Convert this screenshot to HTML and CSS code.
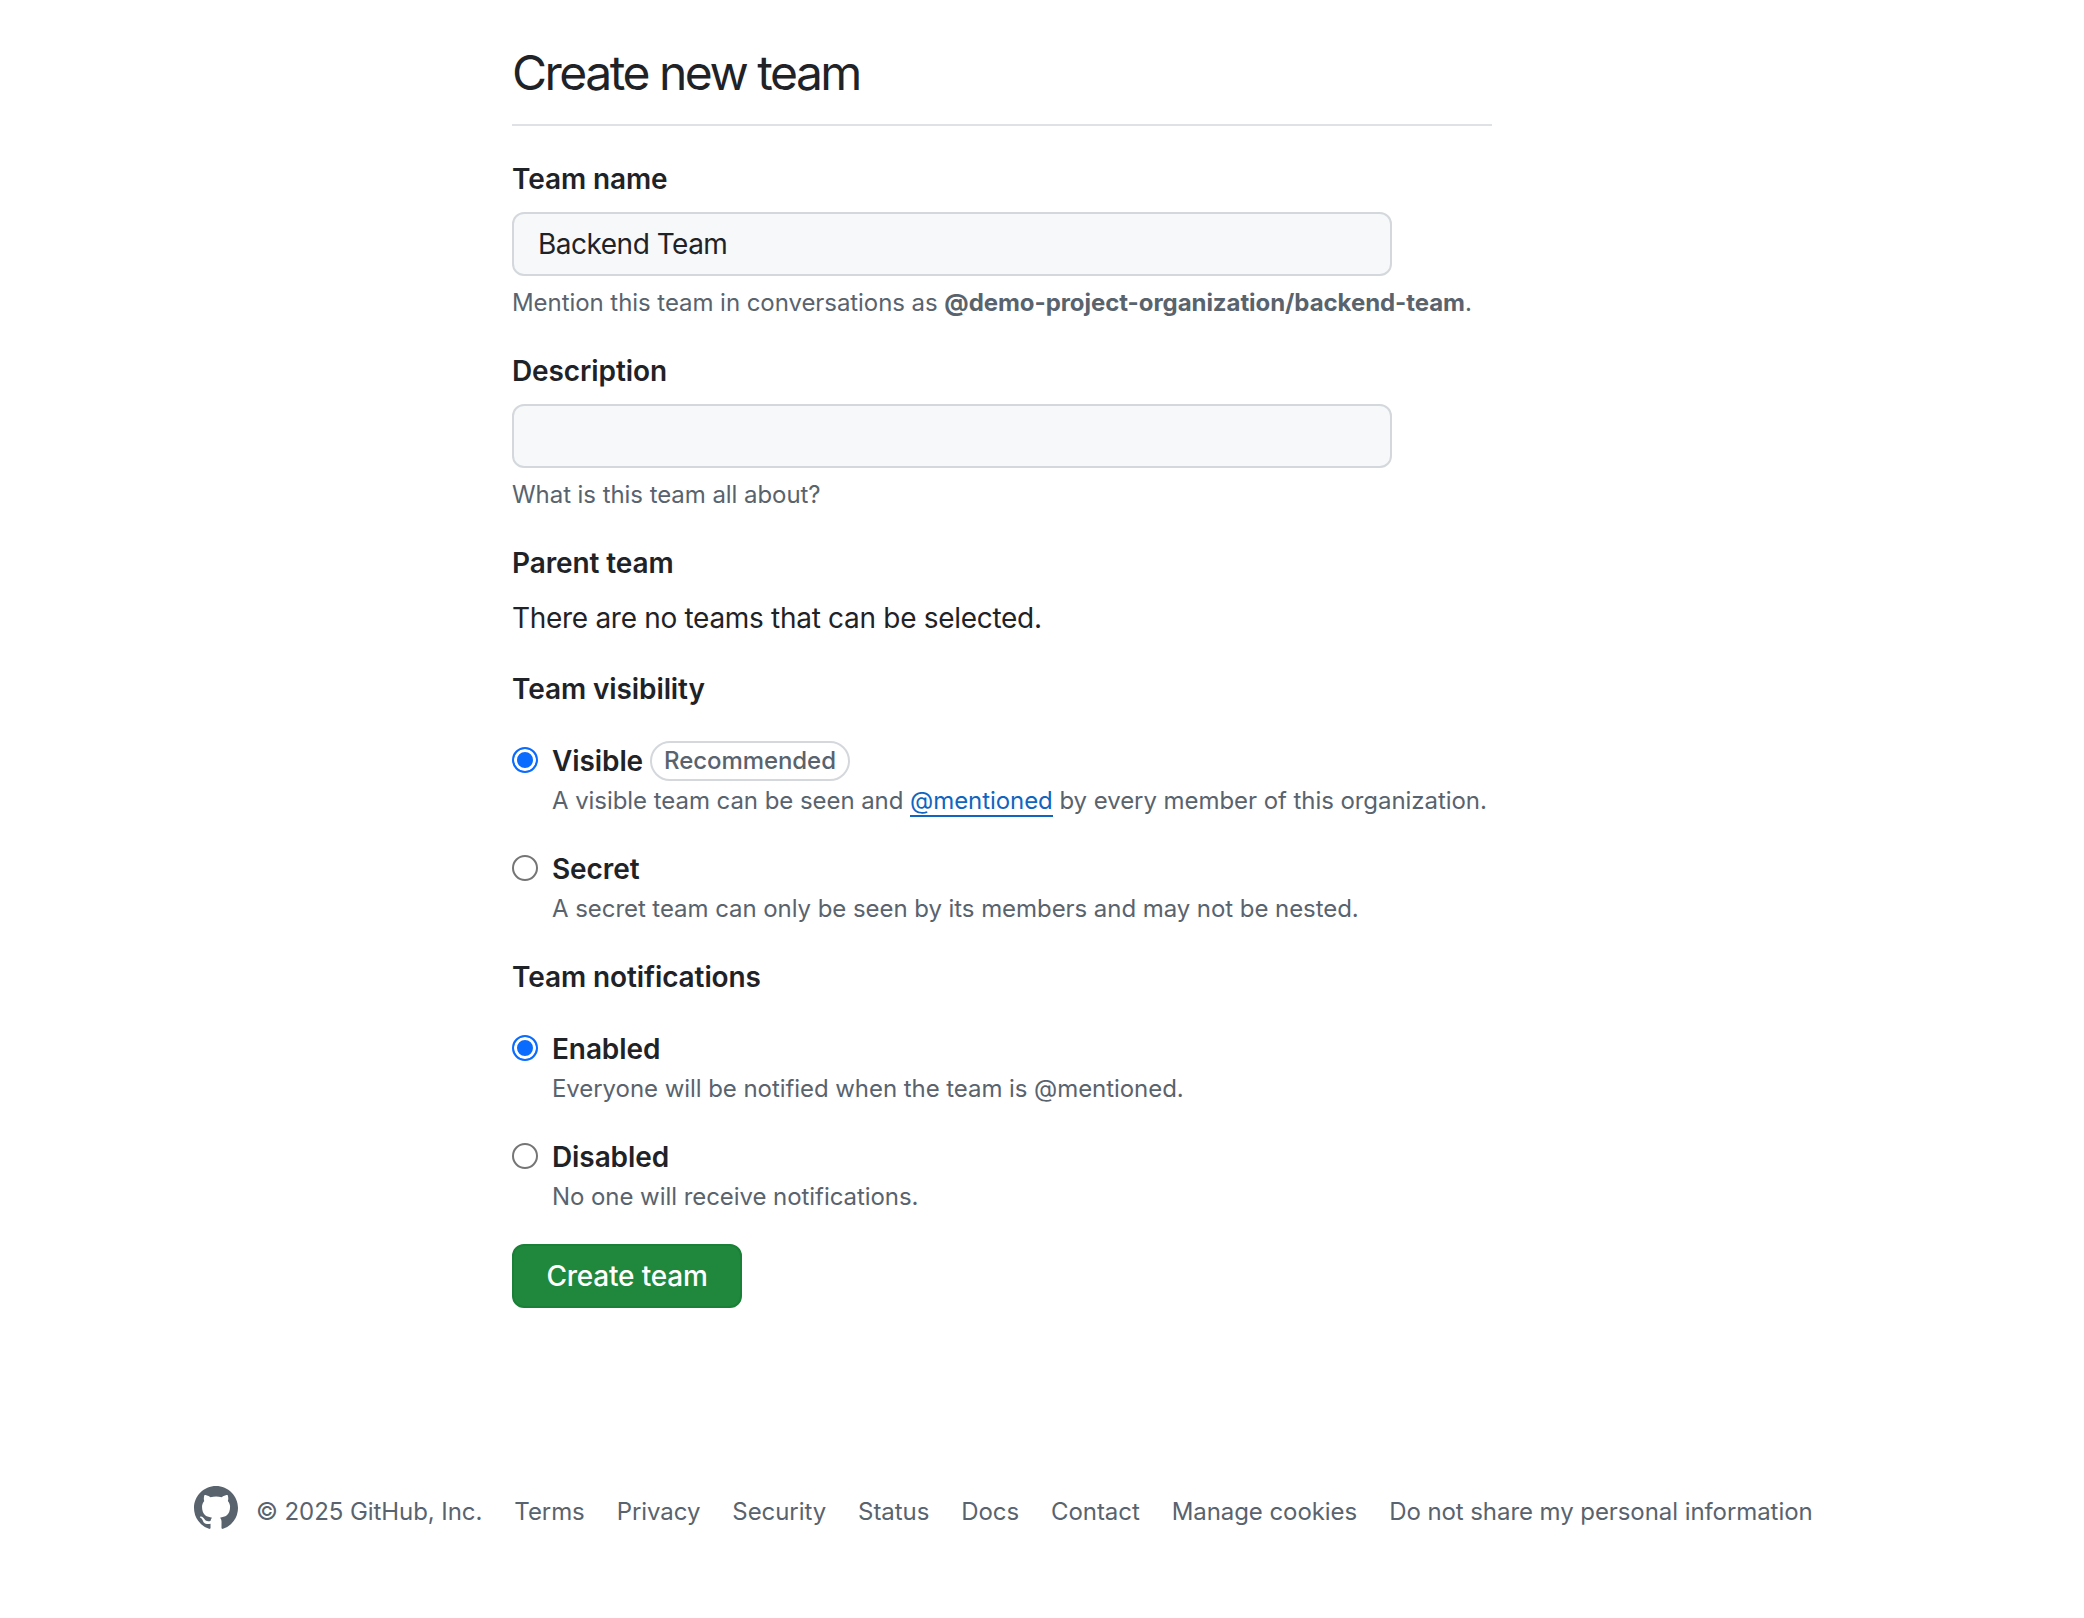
FILE: index.html
```html
<!DOCTYPE html>
<html lang="en">
<head>
    <meta charset="UTF-8">
    <title>Create new team</title>
    <link rel="stylesheet" href="styles.css">
</head>
<body>
    <main class="team-form">
        <h1 class="page-title">Create new team</h1>

        <div class="field">
            <label class="field-label">Team name</label>
            <input class="text-input" type="text" value="Backend Team">
            <p class="note">Mention this team in conversations as <strong>@demo-project-organization/backend-team</strong>.</p>
        </div>

        <div class="field">
            <label class="field-label">Description</label>
            <input class="text-input" type="text">
            <p class="note">What is this team all about?</p>
        </div>

        <div class="field parent-field">
            <label class="field-label">Parent team</label>
            <p class="plain-text">There are no teams that can be selected.</p>
        </div>

        <h2 class="group-title">Team visibility</h2>
        <div class="radio-row">
            <input class="radio" type="radio" name="visibility" checked>
            <div>
                <div class="radio-title">Visible <span class="pill">Recommended</span></div>
                <p class="note">A visible team can be seen and <a href="#">@mentioned</a> by every member of this organization.</p>
            </div>
        </div>
        <div class="radio-row">
            <input class="radio" type="radio" name="visibility">
            <div>
                <div class="radio-title">Secret</div>
                <p class="note">A secret team can only be seen by its members and may not be nested.</p>
            </div>
        </div>

        <h2 class="group-title">Team notifications</h2>
        <div class="radio-row">
            <input class="radio" type="radio" name="notifications" checked>
            <div>
                <div class="radio-title">Enabled</div>
                <p class="note">Everyone will be notified when the team is @mentioned.</p>
            </div>
        </div>
        <div class="radio-row">
            <input class="radio" type="radio" name="notifications">
            <div>
                <div class="radio-title">Disabled</div>
                <p class="note">No one will receive notifications.</p>
            </div>
        </div>

        <button class="create-button" type="button">Create team</button>
    </main>

    <footer class="site-footer">
        <svg class="mark" viewBox="0 0 16 16" aria-hidden="true"><path d="M8 0c4.42 0 8 3.58 8 8a8.013 8.013 0 0 1-5.45 7.59c-.4.08-.55-.17-.55-.38 0-.27.01-1.13.01-2.2 0-.75-.25-1.23-.54-1.48 1.78-.2 3.65-.88 3.65-3.95 0-.88-.31-1.59-.82-2.15.08-.2.36-1.02-.08-2.12 0 0-.67-.22-2.2.82-.64-.18-1.32-.27-2-.27-.68 0-1.36.09-2 .27-1.53-1.03-2.2-.82-2.2-.82-.44 1.1-.16 1.92-.08 2.12-.51.56-.82 1.28-.82 2.15 0 3.06 1.86 3.75 3.64 3.95-.23.2-.44.55-.51 1.07-.46.21-1.61.55-2.33-.66-.15-.24-.6-.83-1.23-.82-.67.01-.27.38.01.53.34.19.73.9.82 1.13.16.45.68 1.31 2.69.94 0 .67.01 1.3.01 1.49 0 .21-.15.45-.55.38A7.995 7.995 0 0 1 0 8c0-4.42 3.58-8 8-8Z"></path></svg>
        <span class="copyright">© 2025 GitHub, Inc.</span>
        <a href="#">Terms</a>
        <a href="#">Privacy</a>
        <a href="#">Security</a>
        <a href="#">Status</a>
        <a href="#">Docs</a>
        <a href="#">Contact</a>
        <a href="#">Manage cookies</a>
        <a href="#">Do not share my personal information</a>
    </footer>
</body>
</html>
```

FILE: styles.css
```css
body {
    background-color: #fff;
    color: #1f2328;
    font-family: 'Inter', sans-serif;
    font-size: 28px;
    margin: 0;
}
p {
    margin: 0;
}
.team-form {
    width: 980px;
    margin-left: 512px;
    padding-top: 40px;
}
.page-title {
    font-size: 48px;
    font-weight: 400;
    line-height: 66px;
    letter-spacing: -2.5px;
    margin: 0 0 33px;
    padding-bottom: 18px;
    border-bottom: 2px solid #dfe2e5;
}
.field {
    margin-bottom: 28px;
}
.parent-field {
    margin-bottom: 31px;
}
.field-label {
    display: block;
    font-weight: 600;
    line-height: 40px;
    letter-spacing: -0.1px;
    margin-bottom: 13px;
}
.text-input {
    display: block;
    box-sizing: border-box;
    width: 880px;
    height: 64px;
    padding: 0 24px;
    font-family: inherit;
    font-size: 28px;
    letter-spacing: -0.5px;
    color: #1f2328;
    background-color: #f6f8fa;
    border: 2px solid #d4d8dc;
    border-radius: 12px;
}
.note {
    font-size: 24px;
    line-height: 40px;
    letter-spacing: -0.06px;
    color: #59636e;
}
.text-input + .note {
    margin-top: 7px;
}
.note a {
    color: #0f65c0;
    text-decoration: none;
    border-bottom: 2px solid #0f65c0;
}
.plain-text {
    line-height: 40px;
    letter-spacing: -0.3px;
    margin-top: 15px;
}
.group-title {
    font-size: 28px;
    font-weight: 600;
    line-height: 40px;
    letter-spacing: -0.1px;
    margin: 0 0 32px;
}
.radio-row {
    display: flex;
    gap: 14px;
    margin-bottom: 28px;
}
.radio {
    appearance: none;
    box-sizing: border-box;
    flex: none;
    width: 26px;
    height: 26px;
    margin: 6px 0 0;
    background-color: #fff;
    border: 2px solid #757575;
    border-radius: 50%;
}
.radio:checked {
    background-color: #0a6cff;
    border-color: #0a6cff;
    box-shadow: inset 0 0 0 3px #fff;
}
.radio-title {
    display: flex;
    align-items: center;
    gap: 7px;
    font-weight: 600;
    line-height: 40px;
    letter-spacing: -0.1px;
}
.pill {
    font-size: 24px;
    font-weight: 500;
    line-height: 36px;
    letter-spacing: -0.07px;
    color: #59636e;
    padding: 0 12px;
    border: 2px solid #d4d8dc;
    border-radius: 40px;
}
.create-button {
    display: block;
    width: 230px;
    height: 64px;
    margin-top: -1px;
    font-family: inherit;
    font-size: 28px;
    font-weight: 500;
    letter-spacing: -0.2px;
    color: #fff;
    background-color: #1f883d;
    border: 2px solid #1a7f37;
    border-radius: 12px;
}
.site-footer {
    display: flex;
    align-items: center;
    gap: 32px;
    margin: 178px 0 0 194px;
    font-size: 24px;
    letter-spacing: -0.07px;
    color: #59636e;
}
.site-footer a {
    color: #59636e;
    text-decoration: none;
}
.mark {
    width: 44px;
    height: 44px;
    fill: #59636e;
    margin-right: -14px;
    margin-bottom: 6px;
}
```
